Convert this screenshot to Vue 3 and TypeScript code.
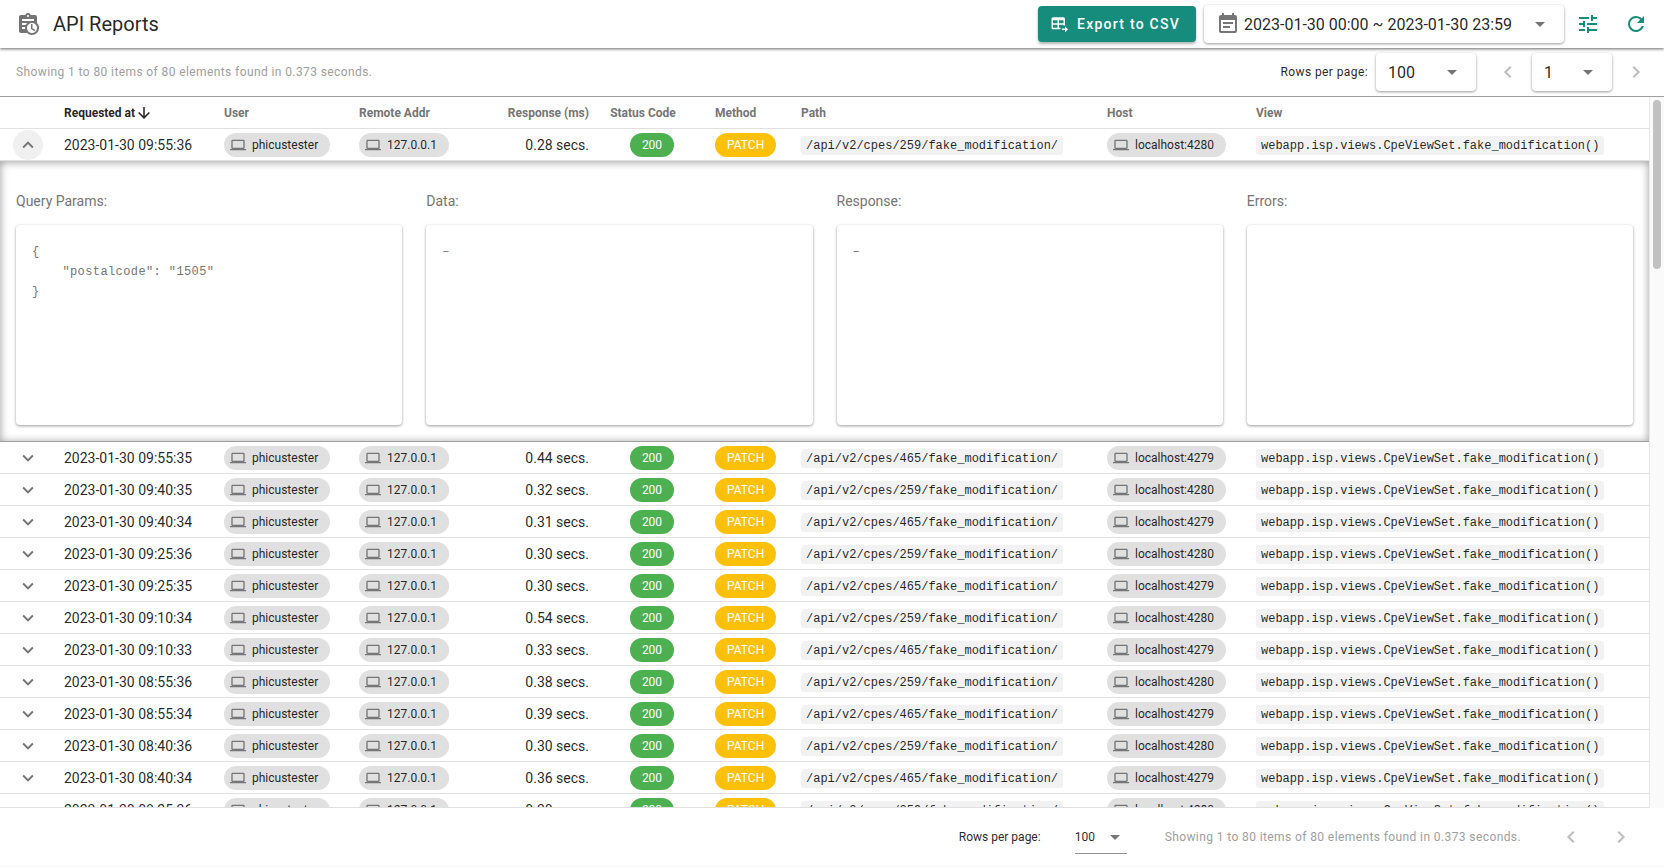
<script setup lang="ts">
import { ref } from 'vue'

interface Row {
  at: string
  secs: string
  cpe: number
  port: number
}

const icons = {
  report:
    'M21 11.11V5C21 3.9 20.11 3 19 3H14.82C14.4 1.84 13.3 1 12 1S9.6 1.84 9.18 3H5C3.9 3 3 3.9 3 5V19C3 20.11 3.9 21 5 21H11.11C12.37 22.24 14.09 23 16 23C19.87 23 23 19.87 23 16C23 14.09 22.24 12.37 21 11.11M12 3C12.55 3 13 3.45 13 4S12.55 5 12 5S11 4.55 11 4S11.45 3 12 3M6 7H18V9H6V7M6 11H11.11C10.5 11.57 10.04 12.25 9.68 13H6V11M6 15H9.08C9.03 15.33 9 15.66 9 16C9 16.34 9.03 16.68 9.08 17H6V15M16 21C13.24 21 11 18.76 11 16S13.24 11 16 11S21 13.24 21 16S18.76 21 16 21M16.5 16.25L19.36 17.94L18.61 19.16L15 17V12H16.5V16.25Z',
  export:
    'M4 3H18A2 2 0 0 1 20 5V14H18V13H12V17H14V19H4A2 2 0 0 1 2 17V5A2 2 0 0 1 4 3M4 7V11H10V7H4M12 7V11H18V7H12M4 13V17H10V13H4M16 18H20V15L24 19L20 23V20H16Z',
  calendar:
    'M14,14H7V16H14M19,19H5V8H19M19,3H18V1H16V3H8V1H6V3H5C3.89,3 3,3.9 3,5V19A2,2 0 0,0 5,21H19A2,2 0 0,0 21,19V5A2,2 0 0,0 19,3M17,10H7V12H17V10Z',
  tune:
    'M3,17V19H9V17H3M3,5V7H13V5H3M13,21V19H21V17H13V15H11V21H13M7,9V11H3V13H7V15H9V9H7M21,13V11H11V13H21M15,9H17V7H21V5H17V3H15V9Z',
  refresh:
    'M17.65,6.35C16.2,4.9 14.21,4 12,4A8,8 0 0,0 4,12A8,8 0 0,0 12,20C15.73,20 18.84,17.45 19.73,14H17.65C16.83,16.33 14.61,18 12,18A6,6 0 0,1 6,12A6,6 0 0,1 12,6C13.66,6 15.14,6.69 16.22,7.78L13,11H20V4L17.65,6.35Z',
  laptop:
    'M4,6H20V16H4M20,18A2,2 0 0,0 22,16V6C22,4.89 21.1,4 20,4H4C2.89,4 2,4.89 2,6V16A2,2 0 0,0 4,18H0V20H24V18H20Z',
  left: 'M15.41,16.58L10.83,12L15.41,7.41L14,6L8,12L14,18L15.41,16.58Z',
  right: 'M8.59,16.58L13.17,12L8.59,7.41L10,6L16,12L10,18L8.59,16.58Z',
  up: 'M7.41,15.41L12,10.83L16.59,15.41L18,14L12,8L6,14L7.41,15.41Z',
  down: 'M7.41,8.58L12,13.17L16.59,8.58L18,10L12,16L6,10L7.41,8.58Z',
  sort: 'M11,4H13V16L18.5,10.5L19.92,11.92L12,19.84L4.08,11.92L5.5,10.5L11,16V4Z',
  caret: 'M7,10L12,15L17,10H7Z',
}

const source: [string, string][] = [
  ['09:55:36', '0.28'],
  ['09:55:35', '0.44'],
  ['09:40:35', '0.32'],
  ['09:40:34', '0.31'],
  ['09:25:36', '0.30'],
  ['09:25:35', '0.30'],
  ['09:10:34', '0.54'],
  ['09:10:33', '0.33'],
  ['08:55:36', '0.38'],
  ['08:55:34', '0.39'],
  ['08:40:36', '0.30'],
  ['08:40:34', '0.36'],
  ['08:25:36', '0.30'],
]

const rows: Row[] = source.map(([time, secs], i) => ({
  at: `2023-01-30 ${time}`,
  secs: `${secs} secs.`,
  cpe: i % 2 === 0 ? 259 : 465,
  port: i % 2 === 0 ? 4280 : 4279,
}))

const panels = [
  { title: 'Query Params:', body: '{\n    "postalcode": "1505"\n}' },
  { title: 'Data:', body: '–' },
  { title: 'Response:', body: '–' },
  { title: 'Errors:', body: '' },
]

const summary = 'Showing 1 to 80 items of 80 elements found in 0.373 seconds.'
const expanded = ref(0)
const perPage = ref('100')
const page = ref('1')

function toggle(i: number) {
  expanded.value = expanded.value === i ? -1 : i
}
</script>

<template>
  <div class="app">
    <header class="bar">
      <svg class="icon grey" viewBox="0 0 24 24"><path :d="icons.report" /></svg>
      <h1>API Reports</h1>
      <button class="export" type="button">
        <svg class="icon s18" viewBox="0 0 24 24"><path :d="icons.export" /></svg>
        Export to CSV
      </button>
      <button class="range" type="button">
        <svg class="icon grey" viewBox="0 0 24 24"><path :d="icons.calendar" /></svg>
        <span>2023-01-30 00:00 ~ 2023-01-30 23:59</span>
        <svg class="icon grey" viewBox="0 0 24 24"><path :d="icons.caret" /></svg>
      </button>
      <button class="tool" type="button" aria-label="Filters">
        <svg class="icon" viewBox="0 0 24 24"><path :d="icons.tune" /></svg>
      </button>
      <button class="tool" type="button" aria-label="Refresh">
        <svg class="icon" viewBox="0 0 24 24"><path :d="icons.refresh" /></svg>
      </button>
    </header>

    <div class="subbar">
      <span class="summary">{{ summary }}</span>
      <label class="spaced" for="per-page">Rows per page:</label>
      <span class="pick wide">
        <select id="per-page" v-model="perPage">
          <option>100</option>
        </select>
        <svg class="icon grey" viewBox="0 0 24 24"><path :d="icons.caret" /></svg>
      </span>
      <button class="nav" type="button" disabled aria-label="Previous page">
        <svg class="icon" viewBox="0 0 24 24"><path :d="icons.left" /></svg>
      </button>
      <span class="pick">
        <select v-model="page" aria-label="Page">
          <option>1</option>
        </select>
        <svg class="icon grey" viewBox="0 0 24 24"><path :d="icons.caret" /></svg>
      </span>
      <button class="nav" type="button" disabled aria-label="Next page">
        <svg class="icon" viewBox="0 0 24 24"><path :d="icons.right" /></svg>
      </button>
    </div>

    <main class="body">
      <div class="scroller">
        <table>
          <colgroup>
            <col class="c-toggle" />
            <col class="c-at" />
            <col class="c-user" />
            <col class="c-addr" />
            <col class="c-resp" />
            <col class="c-status" />
            <col class="c-method" />
            <col class="c-path" />
            <col class="c-host" />
            <col />
          </colgroup>
          <thead>
            <tr>
              <th></th>
              <th class="sorted">
                <span class="sort">Requested at
                  <svg class="icon s18" viewBox="0 0 24 24"><path :d="icons.sort" /></svg>
                </span>
              </th>
              <th>User</th>
              <th>Remote Addr</th>
              <th class="num">Response (ms)</th>
              <th class="mid">Status Code</th>
              <th>Method</th>
              <th>Path</th>
              <th>Host</th>
              <th>View</th>
            </tr>
          </thead>
          <tbody>
            <template v-for="(row, i) in rows" :key="row.at">
              <tr>
                <td class="toggle-cell">
                  <button
                    class="toggle"
                    :class="{ open: expanded === i }"
                    type="button"
                    :aria-expanded="expanded === i"
                    aria-label="Details"
                    @click="toggle(i)"
                  >
                    <svg class="icon grey" viewBox="0 0 24 24">
                      <path :d="expanded === i ? icons.up : icons.down" />
                    </svg>
                  </button>
                </td>
                <td>{{ row.at }}</td>
                <td>
                  <span class="chip">
                    <svg class="icon s16" viewBox="0 0 24 24"><path :d="icons.laptop" /></svg>phicustester
                  </span>
                </td>
                <td>
                  <span class="chip">
                    <svg class="icon s16" viewBox="0 0 24 24"><path :d="icons.laptop" /></svg>127.0.0.1
                  </span>
                </td>
                <td class="num">{{ row.secs }}</td>
                <td class="mid"><span class="chip green">200</span></td>
                <td><span class="chip amber">PATCH</span></td>
                <td><code>/api/v2/cpes/{{ row.cpe }}/fake_modification/</code></td>
                <td>
                  <span class="chip">
                    <svg class="icon s16" viewBox="0 0 24 24"><path :d="icons.laptop" /></svg>localhost:{{ row.port }}
                  </span>
                </td>
                <td><code>webapp.isp.views.CpeViewSet.fake_modification()</code></td>
              </tr>
              <tr v-if="expanded === i">
                <td class="detail" colspan="10">
                  <div class="panels">
                    <section v-for="p in panels" :key="p.title">
                      <h2>{{ p.title }}</h2>
                      <pre>{{ p.body }}</pre>
                    </section>
                  </div>
                </td>
              </tr>
            </template>
          </tbody>
        </table>
      </div>
      <div class="track"><div class="thumb"></div></div>
    </main>

    <footer>
      <label for="per-page-foot">Rows per page:</label>
      <span class="pick flat">
        <select id="per-page-foot" v-model="perPage">
          <option>100</option>
        </select>
        <svg class="icon grey" viewBox="0 0 24 24"><path :d="icons.caret" /></svg>
      </span>
      <span class="summary">{{ summary }}</span>
      <button class="nav" type="button" disabled aria-label="Previous page">
        <svg class="icon" viewBox="0 0 24 24"><path :d="icons.left" /></svg>
      </button>
      <button class="nav" type="button" disabled aria-label="Next page">
        <svg class="icon" viewBox="0 0 24 24"><path :d="icons.right" /></svg>
      </button>
    </footer>
  </div>
</template>

<style>
body {
  background: #fff;
}
</style>

<style scoped>
.app {
  display: flex;
  flex-direction: column;
  height: 100vh;
  box-sizing: border-box;
  border-bottom: 1px solid #f5f5f5;
  font-family: Roboto, 'Liberation Sans', sans-serif;
  font-size: 14px;
  color: rgba(0, 0, 0, 0.87);
  overflow: hidden;
}
button,
select {
  font: inherit;
  color: inherit;
  border: 0;
  padding: 0;
  background: none;
}
.icon {
  width: 24px;
  height: 24px;
  fill: currentColor;
  flex: none;
}
.s18 {
  width: 18px;
  height: 18px;
}
.s16 {
  width: 16px;
  height: 16px;
}
.grey {
  color: #757575;
}
.bar {
  display: flex;
  align-items: center;
  height: 48px;
  flex: none;
  padding: 0 16px;
  z-index: 2;
  background: #fff;
  box-shadow: 0 1px 3px rgba(0, 0, 0, 0.6);
}
.bar h1 {
  flex: 1;
  margin: 0 0 0 13px;
  font-size: 20px;
  line-height: 32px;
  font-weight: 400;
}
.export {
  display: flex;
  align-items: center;
  gap: 9px;
  height: 36px;
  padding: 0 16px 0 12px;
  margin-right: 8px;
  border-radius: 4px;
  background: #168d7c;
  color: #fff;
  font-weight: 500;
  letter-spacing: 0.0892857143em;
  box-shadow: 0 2px 3px rgba(0, 0, 0, 0.3);
}
.range,
.pick {
  display: flex;
  align-items: center;
  border-radius: 4px;
  background: #fff;
  box-shadow: 0 1px 3px rgba(0, 0, 0, 0.4);
  font-size: 16px;
}
.range {
  height: 38px;
  gap: 4px;
  width: 360px;
  padding: 0 12px;
}
.range span {
  flex: 1;
  text-align: left;
}
.tool {
  display: flex;
  margin-left: 12px;
  color: #168d7c;
}
.tool + .tool {
  margin-left: 24px;
}
.subbar {
  display: flex;
  align-items: center;
  height: 48px;
  flex: none;
  padding: 0 16px;
  font-size: 12px;
  border-bottom: 1px solid #9e9e9e;
}
.summary,
.spaced {
  font-size: 12px;
  letter-spacing: 0.0333333333em;
}
.summary {
  color: #9e9e9e;
}
.subbar .summary {
  flex: 1;
}
.pick {
  position: relative;
  width: 80px;
  height: 38px;
}
.pick select {
  appearance: none;
  width: 100%;
  height: 100%;
  padding: 0 36px 0 12px;
  outline: 0;
}
.pick .icon {
  position: absolute;
  right: 12px;
  pointer-events: none;
}
.wide {
  width: 100px;
  margin-left: 8px;
}
.nav {
  display: flex;
  color: #bdbdbd;
}
.subbar .nav {
  margin: 0 12px 0 20px;
}
.subbar .nav:last-child {
  margin: 0 0 0 12px;
}
.body {
  display: flex;
  flex: 1;
  min-height: 0;
}
.scroller {
  flex: 1;
  min-width: 0;
  overflow: hidden;
  border-bottom: 1px solid #e0e0e0;
}
.track {
  width: 15px;
  box-sizing: border-box;
  padding: 3px;
  border-left: 1px solid #e8e8e8;
  background: #fafafa;
}
.thumb {
  width: 8px;
  height: 169px;
  border-radius: 4px;
  background: #c1c1c1;
}
table {
  width: 100%;
  table-layout: fixed;
  border-collapse: separate;
  border-spacing: 0;
}
.c-toggle { width: 56px; }
.c-at { width: 160px; }
.c-user { width: 135px; }
.c-addr { width: 132px; }
.c-resp { width: 114px; }
.c-status { width: 110px; }
.c-method { width: 86px; }
.c-path { width: 306px; }
.c-host { width: 149px; }
th,
td {
  height: 31px;
  padding: 0 8px;
  border-bottom: 1px solid #e0e0e0;
  text-align: left;
  white-space: nowrap;
  vertical-align: middle;
}
th {
  font-size: 12px;
  font-weight: 700;
  color: #757575;
}
th.sorted {
  color: rgba(0, 0, 0, 0.87);
}
.sort {
  display: flex;
  align-items: center;
}
th.num,
td.num {
  text-align: right;
}
th.mid,
td.mid {
  text-align: center;
}
th.mid {
  padding-right: 26px;
}
.toggle-cell {
  padding: 0 0 0 13px;
}
.toggle {
  display: flex;
  align-items: center;
  justify-content: center;
  width: 30px;
  height: 30px;
  border-radius: 15px;
}
.toggle .icon {
  width: 22px;
  height: 22px;
}
.open {
  background: #f0f0f0;
}
.chip {
  display: inline-flex;
  align-items: center;
  vertical-align: middle;
  height: 24px;
  padding: 0 12px;
  border-radius: 12px;
  background: #e0e0e0;
  font-size: 12px;
}
.chip .icon {
  margin: 0 6px 0 -6px;
  color: #757575;
}
.green {
  background: #4caf50;
  color: #fff;
}
.amber {
  background: #ffc107;
  color: #fff;
}
code {
  display: block;
  width: fit-content;
  margin-top: 2px;
  padding: 1px 5px 0;
  border-radius: 3px;
  background: #f2f2f2;
  font-family: 'Liberation Mono', monospace;
  font-size: 12px;
  line-height: 18px;
}
.detail {
  padding: 0;
  white-space: normal;
  border-bottom-color: #9e9e9e;
  box-shadow: inset 0 1px 8px rgba(0, 0, 0, 0.4);
}
.panels {
  display: grid;
  grid-template-columns: repeat(4, 1fr);
  gap: 24px;
  padding: 24px 16px 16px;
}
h2 {
  margin: 4px 0 12px;
  font-size: 14px;
  line-height: 24px;
  font-weight: 400;
  color: #757575;
}
pre {
  box-sizing: border-box;
  height: 200px;
  margin: 0;
  padding: 17px 16px 16px;
  border-radius: 4px;
  background: #fff;
  box-shadow: 0 1px 3px rgba(0, 0, 0, 0.4);
  font-family: 'Liberation Mono', monospace;
  font-size: 12px;
  line-height: 20px;
  letter-spacing: 0.0333333333em;
  color: #757575;
}
footer {
  display: flex;
  align-items: center;
  justify-content: flex-end;
  height: 58px;
  flex: none;
  padding: 0 31px;
  font-size: 12px;
}
.flat {
  width: 52px;
  height: 32px;
  margin: 0 38px 0 34px;
  border-radius: 0;
  border-bottom: 1px solid #949494;
  box-shadow: none;
  font-size: 12px;
}
.flat select {
  padding: 0 24px 0 0;
}
.flat .icon {
  right: 0;
}
footer .nav {
  margin-left: 26px;
}
footer .summary + .nav {
  margin-left: 38px;
}
</style>
